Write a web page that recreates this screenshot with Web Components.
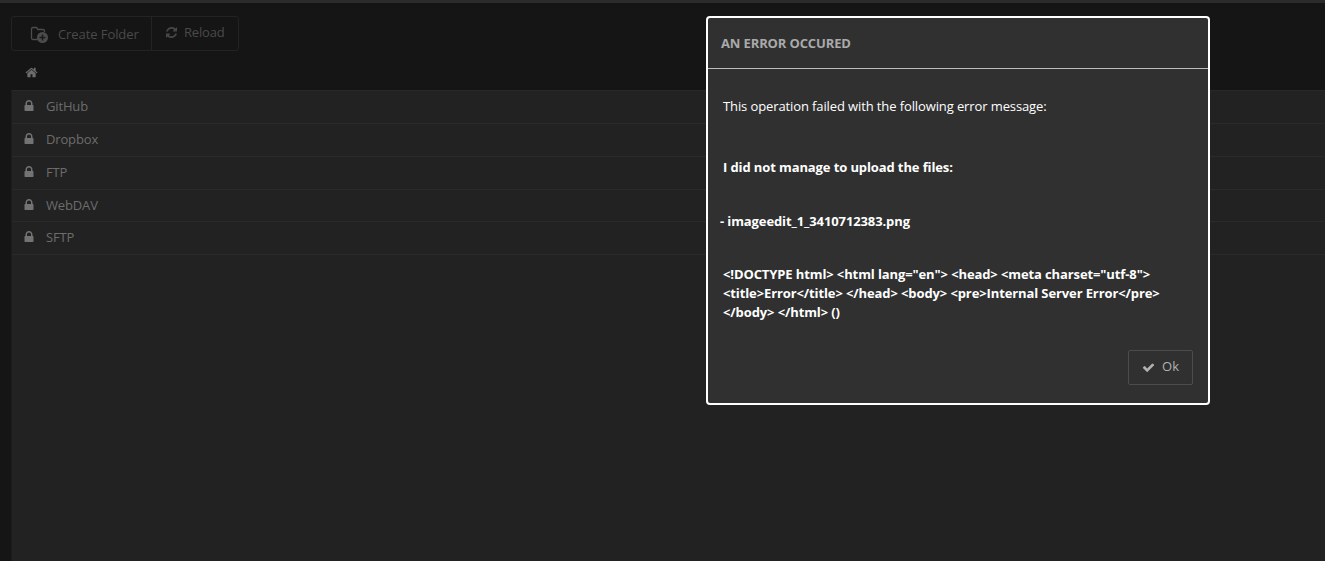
<!DOCTYPE html>
<html lang="en">
<head>
<meta charset="utf-8">
<title>Files</title>
<style>
    html, body { margin: 0; height: 100%; background: #151515; overflow: hidden; }
    body { font: 13px "Open Sans", sans-serif; color: #6c6c6c; }
</style>
</head>
<body>
<file-browser>
    <tool-bar slot="toolbar">
        <tool-button icon="folder" label="Create Folder" class="first"></tool-button>
        <tool-button icon="refresh" label="Reload" class="last"></tool-button>
    </tool-bar>
    <bread-crumb slot="crumbs"></bread-crumb>
    <storage-row>GitHub</storage-row>
    <storage-row>Dropbox</storage-row>
    <storage-row>FTP</storage-row>
    <storage-row>WebDAV</storage-row>
    <storage-row>SFTP</storage-row>
</file-browser>
<error-dialog heading="AN ERROR OCCURED">
    <p>This operation failed with the following error message:</p>
    <p class="strong">I did not manage to upload the files:</p>
    <p class="strong file">- imageedit_1_3410712383.png</p>
    <p class="strong raw">&lt;!DOCTYPE html&gt; &lt;html lang="en"&gt; &lt;head&gt; &lt;meta charset="utf-8"&gt; &lt;title&gt;Error&lt;/title&gt; &lt;/head&gt; &lt;body&gt; &lt;pre&gt;Internal Server Error&lt;/pre&gt; &lt;/body&gt; &lt;/html&gt; ()</p>
</error-dialog>
<script>
const ICONS = {
    lock: 'M640 768h512v-192q0-106-75-181t-181-75-181 75-75 181v192zm832 96v576q0 40-28 68t-68 28h-960q-40 0-68-28t-28-68v-576q0-40 28-68t68-28h32v-192q0-184 132-316t316-132 316 132 132 316v192h32q40 0 68 28t28 68z',
    home: 'M1472 992v480q0 26-19 45t-45 19h-384v-384h-256v384h-384q-26 0-45-19t-19-45v-480q0-1 .5-3t.5-3l575-474 575 474q1 2 1 6zm223-69l-62 74q-8 9-21 11h-3q-13 0-21-7l-692-577-692 577q-12 8-24 7-13-2-21-11l-62-74q-8-10-7-23.5t11-21.5l719-599q32-26 76-26t76 26l244 204v-195q0-14 9-23t23-9h192q14 0 23 9t9 23v408l219 182q10 8 11 21.5t-7 23.5z',
    refresh: 'M1639 1056q0 5-1 7-64 268-268 434.5t-478 166.5q-146 0-282.500-55t-243.500-157l-129 129q-19 19-45 19t-45-19-19-45v-448q0-26 19-45t45-19h448q26 0 45 19t19 45-19 45l-137 137q71 66 161 102t187 36q134 0 250-65t186-179q11-17 53-117 8-23 30-23h192q13 0 22.500 9.500t9.500 22.500zm25-800v448q0 26-19 45t-45 19h-448q-26 0-45-19t-19-45 19-45l138-138q-148-137-349-137-134 0-250 65t-186 179q-11 17-53 117-8 23-30 23h-199q-13 0-22.500-9.500t-9.500-22.500v-7q65-268 270-434.500t480-166.500q146 0 284 55.500t245 156.500l130-129q19-19 45-19t45 19 19 45z',
    check: 'M1671 566q0 40-28 68l-724 724-136 136q-28 28-68 28t-68-28l-136-136-362-362q-28-28-28-68t28-68l136-136q28-28 68-28t68 28l294 295 656-657q28-28 68-28t68 28l136 136q28 28 28 68z'
};

const faIcon = (name, size, color) =>
    `<svg width="${size}" height="${size}" viewBox="0 0 1792 1792" fill="${color}" aria-hidden="true"><path d="${ICONS[name]}"/></svg>`;

class FileBrowser extends HTMLElement {
    constructor() {
        super();
        this.attachShadow({ mode: 'open' });
        this.shadowRoot.innerHTML = `
            <style>
                :host { display: flex; flex-direction: column; height: 100vh; border-top: 3px solid #2b2b2b; box-sizing: border-box; }
                .head { padding: 13px 0 0 11px; }
                .list { flex: 1; margin-left: 11px; background: #222; border-left: 1px solid #1c1c1c; border-top: 1px solid #282828; }
            </style>
            <div class="head">
                <slot name="toolbar"></slot>
                <slot name="crumbs"></slot>
            </div>
            <div class="list"><slot></slot></div>
        `;
    }
}

class ToolBar extends HTMLElement {
    constructor() {
        super();
        this.attachShadow({ mode: 'open' });
        this.shadowRoot.innerHTML = `
            <style>
                :host { display: inline-flex; height: 35px; border: 1px solid #232323; border-radius: 3px; box-sizing: border-box; vertical-align: top; }
            </style>
            <slot></slot>
        `;
    }
}

class ToolButton extends HTMLElement {
    constructor() {
        super();
        this.attachShadow({ mode: 'open' });
    }

    connectedCallback() {
        const isFolder = this.getAttribute('icon') === 'folder';
        const icon = isFolder
            ? `<svg width="18" height="18" viewBox="0 0 18 18" aria-hidden="true">
                    <path d="M1.500 13V4q0-1.500 1.500-1.500h3.500l1.500 2h5q1.500 0 1.500 1.500v1" fill="none" stroke="#4c4c4c" stroke-width="1.300"/>
                    <path d="M1.500 13q0 1.500 1.500 1.500h5" fill="none" stroke="#4c4c4c" stroke-width="1.300"/>
                    <circle cx="12.500" cy="12.500" r="5.500" fill="#4c4c4c"/>
                    <path d="M12.500 9.500v6M9.500 12.500h6" stroke="#1a1a1a" stroke-width="1.500"/>
               </svg>`
            : faIcon('refresh', 13, '#474747');
        this.shadowRoot.innerHTML = `
            <style>
                :host { display: flex; box-sizing: border-box; }
                :host(.first) { width: 140px; padding: 1px 0 0 18px; border-right: 1px solid #232323; letter-spacing: -0.08px; }
                :host(.last) { width: 86px; padding: 0 0 3px 13px; letter-spacing: -0.2px; }
                .in { display: flex; align-items: center; gap: ${isFolder ? 10 : 6}px; color: #4a4a4a; }
            </style>
            <span class="in">${icon}<span>${this.getAttribute('label')}</span></span>
        `;
    }
}

class BreadCrumb extends HTMLElement {
    constructor() {
        super();
        this.attachShadow({ mode: 'open' });
        this.shadowRoot.innerHTML = `
            <style>
                :host { display: flex; align-items: center; height: 39px; box-sizing: border-box; padding: 3px 0 0 14px; }
                svg { display: block; }
            </style>
            ${faIcon('home', 13, '#6c6c6c')}
        `;
    }
}

class StorageRow extends HTMLElement {
    constructor() {
        super();
        this.attachShadow({ mode: 'open' });
        this.shadowRoot.innerHTML = `
            <style>
                :host { display: flex; align-items: center; gap: 10px; height: 33px; box-sizing: border-box; padding: 0 0 2px 10px; border-bottom: 1px solid #2a2a2a; color: #6c6c6c; letter-spacing: -0.15px; }
                :host(:nth-of-type(4)) { height: 32px; padding-bottom: 1px; }
                svg { display: block; }
            </style>
            ${faIcon('lock', 14, '#737373')}
            <slot></slot>
        `;
    }
}

class ErrorDialog extends HTMLElement {
    constructor() {
        super();
        this.attachShadow({ mode: 'open' });
    }

    connectedCallback() {
        this.shadowRoot.innerHTML = `
            <style>
                :host { position: absolute; top: 16px; left: 706px; width: 504px; height: 389px; box-sizing: border-box; border: 2px solid #fff; border-radius: 4px; background: #303030; display: flex; flex-direction: column; color: #fff; }
                header { height: 51px; box-sizing: border-box; padding-left: 13px; display: flex; align-items: center; border-bottom: 1px solid #bdbdbd; font-weight: 700; font-size: 13px; letter-spacing: -0.13px; color: #aaa; flex: none; }
                main { flex: 1; padding: 28px 15px 0; letter-spacing: -0.11px; }
                footer { display: flex; justify-content: flex-end; padding: 0 15px 18px; }
                button { display: flex; align-items: center; justify-content: center; gap: 7px; width: 65px; height: 35px; padding: 0 0 4px; background: transparent; border: 1px solid #4c4c4c; border-radius: 2px; color: #b0b0b0; font: inherit; }
                button svg { margin-top: 4px; }
                ::slotted(p) { margin: 0 0 42px; line-height: 19px; }
                ::slotted(.strong) { font-weight: 700; margin-bottom: 35px; }
                ::slotted(.file) { margin-left: -3px; margin-bottom: 34px; }
                ::slotted(.raw) { margin: 0; }
            </style>
            <header>${this.getAttribute('heading')}</header>
            <main><slot></slot></main>
            <footer><button type="button">${faIcon('check', 13, '#b0b0b0')}Ok</button></footer>
        `;
    }
}

customElements.define('file-browser', FileBrowser);
customElements.define('tool-bar', ToolBar);
customElements.define('tool-button', ToolButton);
customElements.define('bread-crumb', BreadCrumb);
customElements.define('storage-row', StorageRow);
customElements.define('error-dialog', ErrorDialog);
</script>
</body>
</html>
